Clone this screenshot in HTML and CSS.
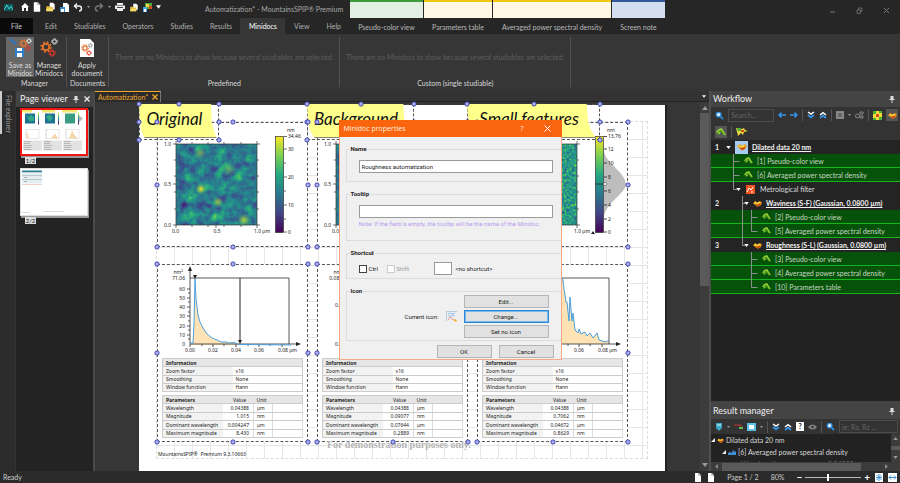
FILE: index.html
```html
<!DOCTYPE html>
<html lang="en">
<head>
<meta charset="utf-8">
<title>Automatization* - MountainsSPIP® Premium</title>
<link rel="stylesheet" href="styles.css">
</head>
<body>
<svg class="defs" aria-hidden="true">
  <defs>
    <filter id="rough" x="0" y="0" width="100%" height="100%" color-interpolation-filters="sRGB">
      <feTurbulence type="fractalNoise" baseFrequency="0.1" numOctaves="5" seed="11"/>
      <feColorMatrix values=".7 .6 0 0 -0.22  .7 .6 0 0 -0.22  .7 .6 0 0 -0.22  0 0 0 0 1"/>
      <feComponentTransfer>
        <feFuncR type="table" tableValues=".27 .25 .19 .14 .18 .45 .99"/>
        <feFuncG type="table" tableValues=".03 .25 .42 .56 .70 .82 .90"/>
        <feFuncB type="table" tableValues=".33 .53 .56 .55 .48 .30 .14"/>
      </feComponentTransfer>
    </filter>
    <filter id="fine" x="0" y="0" width="100%" height="100%" color-interpolation-filters="sRGB">
      <feTurbulence type="fractalNoise" baseFrequency="0.4" numOctaves="2" seed="5"/>
      <feColorMatrix values=".8 .4 0 0 -0.05  .8 .4 0 0 -0.05  .8 .4 0 0 -0.05  0 0 0 0 1"/>
      <feComponentTransfer>
        <feFuncR type="table" tableValues=".27 .25 .19 .14 .18 .45 .99"/>
        <feFuncG type="table" tableValues=".03 .25 .42 .56 .70 .82 .90"/>
        <feFuncB type="table" tableValues=".33 .53 .56 .55 .48 .30 .14"/>
      </feComponentTransfer>
    </filter>
    <linearGradient id="viridis" x1="0" y1="1" x2="0" y2="0">
      <stop offset="0" stop-color="#440154"/><stop offset=".2" stop-color="#414487"/><stop offset=".4" stop-color="#2a788e"/><stop offset=".6" stop-color="#22a884"/><stop offset=".8" stop-color="#7ad151"/><stop offset="1" stop-color="#fde725"/>
    </linearGradient>
    <radialGradient id="spot"><stop offset="0" stop-color="#f4e625"/><stop offset=".4" stop-color="#a0d53a" stop-opacity=".75"/><stop offset="1" stop-color="#35b779" stop-opacity="0"/></radialGradient>
    <symbol id="gear" viewBox="0 0 12 12"><circle cx="6" cy="6" r="3.2" fill="none" stroke="currentColor" stroke-width="1.7"/><circle cx="6" cy="6" r="4.9" fill="none" stroke="currentColor" stroke-width="1.6" stroke-dasharray="1.95 1.9"/></symbol>
    <symbol id="page" viewBox="0 0 10 12"><path d="M1 0h5l3 3v9H1z" fill="#fff"/><path d="M6 0v3h3" fill="none" stroke="#888"/></symbol>
    <symbol id="folder" viewBox="0 0 12 12"><path d="M5 1h4l2 2v6H5z" fill="#fff"/><path d="M1 5h3l1 1h4v5H1z" fill="#e9c23c"/><path d="M1 8h8v3H1z" fill="#f7dd6c"/></symbol>
    <symbol id="pin" viewBox="0 0 8 8"><path d="M2.5 1h3v3h1v1h-5V4h1zM3.6 5h.9v3h-.9z" fill="#ddd"/></symbol>
    <symbol id="wand" viewBox="0 0 10 8"><path d="M1 4.500 3 1l3-.3L9 7 7.500 7.500 5 4 3.500 4 2 7z" fill="#4d9a1c"/><path d="M.5 4.500 3 1.500 5.500 1 9.300 6.800M2.500 6l1.500-2" fill="none" stroke="#9ed63c" stroke-width="1.3"/></symbol>
    <symbol id="surface" viewBox="0 0 12 9"><path d="m0 4 3-3 3 2 3-2 3 2-2 4-4 1.8z" fill="#e8941a"/><path d="m1 4 2-2 2 2 3-2 2 1-3 2z" fill="#ffe14a"/><path d="m3 5 3 1 4-2-1 3-3 1z" fill="#c3420f"/></symbol>
    <symbol id="lens" viewBox="0 0 10 10"><circle cx="4" cy="4" r="2.6" fill="#dff0ff" stroke="#2f8fe0" stroke-width="1.4"/><path d="m6 6 3 3" stroke="#2f8fe0" stroke-width="1.8"/></symbol>
    <symbol id="down2" viewBox="0 0 8 8"><path d="m1 1 3 2 3-2" fill="none" stroke="#fff" stroke-width="1.5"/><path d="m1 4 3 2.4L7 4" fill="none" stroke="#3597ec" stroke-width="1.7"/></symbol>
    <symbol id="up2" viewBox="0 0 8 8"><path d="m1 4 3-2.4L7 4" fill="none" stroke="#fff" stroke-width="1.5"/><path d="m1 7 3-2.4L7 7" fill="none" stroke="#3597ec" stroke-width="1.7"/></symbol>
    <symbol id="caret" viewBox="0 0 6 4"><path d="M0 0h6L3 4z" fill="currentColor"/></symbol>
    <symbol id="mapaxes" viewBox="0 0 151 125">
      <path d="M16 22h87M16 103h87M19 19v87M100 19v87M17 38h2M17 54h2M17 70h2M17 87h2M35 103v2M51 103v2M59 103v3M67 103v2M84 103v2M35 20v2M51 20v2M67 20v2M84 20v2M100 38h2M100 54h2M100 70h2M100 87h2M16 62h3" stroke="#333" stroke-width=".7" fill="none"/>
      <g class="lbl"><text x="14" y="24" text-anchor="end">1.0</text><text x="14" y="64" text-anchor="end">0.5</text><text x="14" y="105" text-anchor="end">0.0</text><text x="15" y="111">0.0</text><text x="60" y="111" text-anchor="middle">0.5</text><text x="97" y="111">1.0 µm</text></g>
    </symbol>
    <symbol id="psdaxes" viewBox="0 0 151 92">
      <path d="M33 80V5M33 80h108M33 14h99v66M30 25h3M30 34h3M30 43h3M30 52h3M30 62h3M30 71h3M31 29h2M31 38h2M31 48h2M31 57h2M31 66h2M31 75h2M33 80v3M45 80v2M56 80v3M67 80v2M79 80v3M91 80v2M102 80v3M113 80v2M125 80v3" stroke="#444" stroke-width=".9" fill="none"/>
      <path d="m33 2 2 5h-4zM144 80l-5-2v4z" fill="#222"/>
      <g class="lbl"><text x="33" y="88" text-anchor="middle">0.00</text><text x="56" y="88" text-anchor="middle">0.02</text><text x="79" y="88" text-anchor="middle">0.04</text><text x="102" y="88" text-anchor="middle">0.06</text><text x="121" y="88">0.08 µm</text></g>
    </symbol>
  </defs>
</svg>

<div class="app">
  <header class="top">
    <div class="top-left">
      <div class="titlebar">
        <div class="qat">
          <svg class="logo" width="9" height="9" viewBox="0 0 9 9"><path d="M0 1h9v7H0z" fill="#0d5962"/><path d="m0 7 3-5 2 4 2-3 2 4" fill="none" stroke="#43d0bb"/></svg>
          <svg width="8" height="8" viewBox="0 0 8 8"><path d="M4 0 0 4h1v4h2V5h2v3h2V4h1z" fill="#fff"/></svg>
          <svg width="8" height="10"><use href="#page"/></svg>
          <svg width="11" height="10"><use href="#folder"/></svg>
          <svg width="9" height="9" viewBox="0 0 9 9"><path d="M3 0h4l2 2v7H3z" fill="#fff"/><path d="M0 4h5v5H0z" fill="#3589cf"/><path d="M1 6h3v3H1z" fill="#fff"/></svg>
          <svg width="10" height="9" viewBox="0 0 10 9"><path d="M1 3h5a2.5 2.5 0 0 1 0 5M4 .5 1.5 3 4 5.500" fill="none" stroke="#eee" stroke-width="1.4"/></svg>
          <svg class="dim" width="3" height="2"><use href="#caret"/></svg>
          <svg width="10" height="9" viewBox="0 0 10 9"><path d="M9 3H4a2.500 2.500 0 0 0 0 5M6 .5 8.500 3 6 5.500" fill="none" stroke="#777" stroke-width="1.4"/></svg>
          <svg class="dim" width="3" height="2"><use href="#caret"/></svg>
          <svg width="10" height="8" viewBox="0 0 10 8"><path d="M2 0h6v2H2zM0 2.500h10V6H0zM2 5h6v3H2z" fill="#eee"/><path d="M2 4.500h6" stroke="#444"/></svg>
          <svg width="10" height="9"><use href="#folder"/></svg>
          <svg width="9" height="9" viewBox="0 0 9 9"><path d="M2 0h7v6H2z" fill="#50a83a"/><path d="M3 1h3v3H3z" fill="#f4d33c"/><path d="M6 3h3v3H6z" fill="#d64a22"/><path d="M0 4h4v5H0z" fill="#4ba5ea"/><path d="M1 6h2v3H1z" fill="#fff"/></svg>
          <svg class="lit" width="5" height="4"><use href="#caret"/></svg>
        </div>
        <div class="title">Automatization* - MountainsSPIP® Premium</div>
      </div>
      <nav class="tabs">
        <button class="file">File</button><button>Edit</button><button>Studiables</button><button>Operators</button><button>Studies</button><button>Results</button><button class="on">Minidocs</button><button>View</button><button>Help</button>
      </nav>
    </div>
    <nav class="context">
      <button class="green"><i></i>Pseudo-color view</button>
      <button class="yellow"><i></i>Parameters table</button>
      <button class="yellow"><i></i>Averaged power spectral density</button>
      <button class="blue"><i></i>Screen note</button>
    </nav>
    <div class="winctl">
      <button aria-label="Minimize"><svg width="7" height="7" viewBox="0 0 7 7"><path d="M1 5h5" stroke="#777"/></svg></button>
      <button aria-label="Restore"><svg width="7" height="7" viewBox="0 0 7 7"><path d="M1 3h3.500v3.500H1zM2.500 3V1H6v3.500H4.500" fill="none" stroke="#666"/></svg></button>
      <button aria-label="Close"><svg width="7" height="7" viewBox="0 0 7 7"><path d="m1 1 5 5M6 1 1 6" stroke="#777"/></svg></button>
    </div>
  </header>

  <section class="ribbon">
    <div class="group">
      <div class="items">
        <button class="big sel"><svg width="24" height="20" viewBox="0 0 24 20"><path d="m2 1 6 5" stroke="#2a79c6" stroke-width="2"/><path d="M7 10h9v9H7z" fill="#2f7fca"/><path d="M9 10h5v3H9zM9 15h5v4H9z" fill="#fff"/><svg x="11" y="1" width="9" height="9" color="#e8742c"><use href="#gear"/></svg><svg x="18" y="0" width="6" height="6" color="#eee"><use href="#gear"/></svg><svg x="17" y="7" width="6" height="6" color="#e03a28"><use href="#gear"/></svg></svg>Save as<br>Minidoc</button>
        <button class="big"><svg width="20" height="20" viewBox="0 0 20 20"><svg x="1" y="3" width="12" height="12" color="#e8742c"><use href="#gear"/></svg><svg x="12" y="0" width="7" height="7" color="#eee"><use href="#gear"/></svg><svg x="9" y="11" width="8" height="8" color="#e03a28"><use href="#gear"/></svg></svg>Manage<br>Minidocs</button>
      </div>
      <div class="cap">Manager</div>
    </div>
    <div class="group">
      <div class="items">
        <button class="big wide"><svg width="16" height="20" viewBox="0 0 16 20"><path d="M1 1h10l4 4v14H1z" fill="#fff"/><svg x="2" y="6" width="8" height="8" color="#e8742c"><use href="#gear"/></svg><svg x="9" y="5" width="5" height="5" color="#777"><use href="#gear"/></svg><svg x="7" y="12" width="6" height="6" color="#e03a28"><use href="#gear"/></svg></svg>Apply<br>document</button>
      </div>
      <div class="cap">Documents</div>
    </div>
    <div class="group gallery">
      <p>There are no Minidocs to show because several studiables are selected.</p>
      <div class="cap">Predefined</div>
    </div>
    <div class="group gallery">
      <p>There are no Minidocs to show because several studiables are selected.</p>
      <div class="cap">Custom (single studiable)</div>
    </div>
  </section>

  <main class="work">
    <aside class="strip"><span>File explorer</span></aside>
    <aside class="viewer">
      <h2>Page viewer <svg width="8" height="8"><use href="#pin"/></svg><svg width="6" height="6" viewBox="0 0 6 6"><path d="m.5.5 5 5M5.500.5l-5 5" stroke="#eee" stroke-width="1.3"/></svg></h2>
      <div class="thumbs">
        <figure class="cur">
          <svg viewBox="0 0 66 45"><path d="M0 0h11v3H0zM21 0h13v3H21zM41 0h15v3H41z" fill="#f2ea70"/><path d="M4 4h10v10H4zM24 4h10v10H24z" fill="#1f7391"/><path d="m5 6 3 2 2-3 3 3v3l-4 1zM25 7l4-2 3 4-4 3z" fill="#32a889"/><path d="M44 4h10v10H44z" fill="#3a9c82"/><path d="M17 3h1v12h-1zM37 3h1v12h-1z" fill="url(#viridis)"/><path d="M57 3h1v12h-1z" fill="url(#viridis)"/><path d="m58 6 4 3-4 4z" fill="#bbb"/><path d="M5 29V20M25 29V20M45 29V20M5 20h13v9H5zM25 20h13v9H25zM45 20h13v9H45z" fill="none" stroke="#ccc" stroke-width=".5"/><path d="m6 29 0-7 2 6zM30 29l4-5 3 5zM48 29l3-8 3 5 3 3z" fill="#f5d6a8"/><path d="M2 31h19v10H2zM22 31h19v10H22zM42 31h19v10H42z" fill="#e3e3e3"/><path d="M3 32h7M3 34h6M3 36h8M3 38h7M3 40h8M23 32h7M23 34h6M23 36h8M23 38h7M23 40h8M43 32h7M43 34h6M43 36h8M43 38h7M43 40h8" stroke="#999" stroke-width=".6"/></svg>
          <figcaption>1/2</figcaption>
        </figure>
        <figure>
          <svg viewBox="0 0 66 45"><path d="M1 1h20v2H1z" fill="#287d91"/><path d="M1 3h20v11H1z" fill="#e6edf1"/><path d="M1 6h20M1 10h20" stroke="#b7cad4"/><path d="M1 15h20" stroke="#e6a58c" stroke-width=".5"/><path d="M3 8h3M3 12h3" stroke="#888" stroke-width=".6"/><path d="M23 42h20M1 43h8" stroke="#ccc" stroke-width=".7"/></svg>
          <figcaption>2/2</figcaption>
        </figure>
      </div>
    </aside>

    <section class="doc">
      <div class="doctabs"><button>Automatization* <svg width="6" height="6" viewBox="0 0 6 6"><path d="m.5.5 5 5M5.500.5l-5 5" stroke="#f0a92c" stroke-width="1.300"/></svg></button><svg class="lit" width="4" height="3"><use href="#caret"/></svg></div>
      <div class="docbody">
        <div class="canvas">
          <div class="paper">
            <div class="note n1 picked"><b>Original</b></div>
            <div class="note n2 picked"><b>Background</b></div>
            <div class="note n3 picked"><b>Small features</b></div>
            <div class="board">
              <div class="frame picked">
                <svg viewBox="0 0 151 125"><rect x="19" y="22" width="81" height="81" filter="url(#rough)"/><circle cx="44" cy="67" r="6" fill="url(#spot)"/><circle cx="87" cy="98" r="7" fill="url(#spot)" opacity=".7"/><circle cx="61" cy="80" r="6" fill="url(#spot)" opacity=".6"/><circle cx="43" cy="31" r="7" fill="url(#spot)" opacity=".4"/><circle cx="72" cy="47" r="8" fill="url(#spot)" opacity=".3"/><use href="#mapaxes"/><rect x="118.500" y="14.500" width="8" height="96" fill="url(#viridis)" stroke="#333" stroke-width=".7"/><path d="M127 14.500h3M127 27h3M127 55h3M127 83h3M127 110h3M127 41h2M127 69h2M127 97h2" stroke="#333" stroke-width=".7"/><g class="lbl"><text x="130" y="10">nm</text><text x="131" y="16">34.46</text><text x="131" y="29">30</text><text x="131" y="57">20</text><text x="131" y="85">10</text><text x="131" y="112">0</text></g></svg>
              </div>
              <div class="frame picked">
                <svg viewBox="0 0 151 125"><rect x="19" y="22" width="81" height="81" filter="url(#rough)"/><use href="#mapaxes"/><rect x="118.500" y="14.500" width="8" height="96" fill="url(#viridis)"/></svg>
              </div>
              <div class="frame picked">
                <svg viewBox="0 0 151 125"><path d="M127 30c3 12 21 20 22 32-1 10-19 18-22 32z" fill="#bdbdbd"/><rect x="19" y="22" width="81" height="81" filter="url(#fine)"/><use href="#mapaxes"/><rect x="118.500" y="14.500" width="8" height="96" fill="url(#viridis)" stroke="#333" stroke-width=".7"/><path d="M127 14.500h3M127 27h3M127 41h3M127 55h3M127 69h3M127 83h3M127 97h3M127 110h3M118 62h9" stroke="#222" stroke-width=".8"/><circle cx="128" cy="62" r="1.600" fill="#fff" stroke="#444" stroke-width=".6"/><path d="m116 109 2 3h-4z" fill="#223"/><g class="lbl"><text x="130" y="10">nm</text><text x="131" y="16">13.76</text><text x="131" y="29">12</text><text x="131" y="43">10</text><text x="131" y="57">8</text><text x="131" y="71">6</text><text x="131" y="85">4</text><text x="131" y="99">2</text><text x="131" y="112">0</text></g></svg>
              </div>

              <div class="frame picked">
                <svg viewBox="0 0 151 92"><path d="M33 80h3l1-20 1-45 1 20 2 16 2 7 3 6 4 6 5 4 5 2 4 2 5 0 3 1 5-.5 5 2h8l44 .5H33z" fill="#ffe3b5"/><use href="#psdaxes"/><path d="M83 14v63" stroke="#222"/><path d="m83 80-2-4h4zM36 11h4l-2 4z" fill="#222"/><path d="M33 79h3l1-19 1-45 1 20 2 16 2 7 3 6 4 6 5 4 5 2 4 2 5 0 3 1 5-.5 5 2h8l44 .5" fill="none" stroke="#4a9fdf"/><g class="lbl"><text x="26" y="10" text-anchor="end">nm²</text><g text-anchor="end"><text x="28" y="16">71.06</text><text x="28" y="27">60</text><text x="28" y="36">50</text><text x="28" y="45">40</text><text x="28" y="54">30</text><text x="28" y="64">20</text><text x="28" y="73">10</text><text x="28" y="82">0</text></g></g></svg>
                <table><tr><th colspan="2">Information</th></tr><tr><td>Zoom factor</td><td>x16</td></tr><tr><td>Smoothing</td><td>None</td></tr><tr><td>Window function</td><td>Hann</td></tr></table>
                <table class="par"><tr><th>Parameters</th><th>Value</th><th>Unit</th><th></th></tr><tr><td>Wavelength</td><td>0.04388</td><td>µm</td><td></td></tr><tr><td>Magnitude</td><td>1.015</td><td>nm</td><td></td></tr><tr><td>Dominant wavelength</td><td>0.004247</td><td>µm</td><td></td></tr><tr><td>Maximum magnitude</td><td>8.430</td><td>nm</td><td></td></tr></table>
              </div>
              <div class="frame picked">
                <svg viewBox="0 0 151 92"><use href="#psdaxes"/><g class="lbl" text-anchor="end"><text x="26" y="10">nm²</text><text x="28" y="16">0.0838</text><text x="28" y="43">0.05</text><text x="28" y="82">0.00</text></g></svg>
                <table><tr><th colspan="2">Information</th></tr><tr><td>Zoom factor</td><td>x16</td></tr><tr><td>Smoothing</td><td>None</td></tr><tr><td>Window function</td><td>Hann</td></tr></table>
                <table class="par"><tr><th>Parameters</th><th>Value</th><th>Unit</th><th></th></tr><tr><td>Wavelength</td><td>0.04388</td><td>µm</td><td></td></tr><tr><td>Magnitude</td><td>0.09077</td><td>nm</td><td></td></tr><tr><td>Dominant wavelength</td><td>0.07644</td><td>µm</td><td></td></tr><tr><td>Maximum magnitude</td><td>0.2889</td><td>nm</td><td></td></tr></table>
              </div>
              <div class="frame picked">
                <svg viewBox="0 0 151 92"><path d="m80 80 5-66 1 2 1 9 2 13h1l2 19 1-24 2 24 1-8 2 17 3 3 1-4 2 5 4-2 2 4 3-3 3 5 4-5 2 7 3 1 4 1 3-2v4z" fill="#ffe3b5"/><use href="#psdaxes"/><path d="m80 60 5-46 1 2 1 9 2 13h1l2 19 1-24 2 24 1-8 2 17 3 3 1-4 2 5 4-2 2 4 3-3 3 5 4-5 2 7 3 1 4 1 3-2" fill="none" stroke="#4a9fdf"/></svg>
                <table><tr><th colspan="2">Information</th></tr><tr><td>Zoom factor</td><td>x16</td></tr><tr><td>Smoothing</td><td>None</td></tr><tr><td>Window function</td><td>Hann</td></tr></table>
                <table class="par"><tr><th>Parameters</th><th>Value</th><th>Unit</th><th></th></tr><tr><td>Wavelength</td><td>0.04388</td><td>µm</td><td></td></tr><tr><td>Magnitude</td><td>0.7062</td><td>nm</td><td></td></tr><tr><td>Dominant wavelength</td><td>0.04672</td><td>µm</td><td></td></tr><tr><td>Maximum magnitude</td><td>0.8629</td><td>nm</td><td></td></tr></table>
              </div>
            </div>
            <div class="mark">For demonstration purposes only.</div>
            <div class="foot">MountainsSPIP®  Premium 9.3.10663</div>
          </div>
        </div>
        <div class="vscroll"><svg width="6" height="4" class="flip"><use href="#caret"/></svg><i></i><svg width="6" height="4"><use href="#caret"/></svg></div>
      </div>
    </section>

    <aside class="side">
      <section class="flow">
        <h2>Workflow <svg width="8" height="8"><use href="#pin"/></svg></h2>
        <div class="tools">
          <svg width="9" height="9"><use href="#lens"/></svg>
          <input type="text" placeholder="Search..." aria-label="Search workflow">
          <svg width="8" height="6" viewBox="0 0 8 6"><path d="M8 3H1m2.500-2.500L1 3l2.500 2.500" fill="none" stroke="#3597ec" stroke-width="1.400"/></svg>
          <svg width="8" height="6" viewBox="0 0 8 6"><path d="M0 3h7M4.500.5 7 3 4.500 5.500" fill="none" stroke="#3597ec" stroke-width="1.400"/></svg>
          <hr><svg width="8" height="8"><use href="#down2"/></svg><svg width="8" height="8"><use href="#up2"/></svg><hr>
          <svg width="8" height="8" viewBox="0 0 8 8"><path d="M0 0h8v8H0z" fill="#888"/><path d="M2 3h4M2 5h4" stroke="#444"/></svg>
          <svg class="dim" width="3" height="2"><use href="#caret"/></svg>
          <svg width="9" height="8" viewBox="0 0 9 8"><circle cx="2.500" cy="5" r="2" fill="none" stroke="#888"/><path d="M5 1h3v2H5zM5 5h3v2H5z" fill="none" stroke="#888"/></svg>
          <hr>
          <svg width="9" height="9" viewBox="0 0 9 9"><path d="M0 0h9v9H0z" fill="#f6da38"/><path d="M0 0h3v3H0zM6 6h3v3H6zM6 0h3v2H6zM0 7h3v2H0z" fill="#4dae3a"/><path d="M3 3h3v3H3z" fill="#d84a20"/></svg>
          <span class="tog"><svg width="9" height="7"><use href="#surface"/></svg></span>
        </div>
        <div class="tools two"><span class="tog"><svg width="10" height="8"><use href="#wand"/></svg></span><hr><svg width="12" height="9" viewBox="0 0 12 9"><path d="m0 1 6 1 2-1 1 2 3 1-4 1-1 3-2-2-3 3z" fill="#e7d63b"/><path d="M1 1h4v3H2z" fill="#50ad3c"/><path d="M5 3h3v2H5z" fill="#d94d22"/></svg></div>
        <div class="tree">
          <svg class="links" width="60" height="154"><path d="M22.500 14v35.500H26M22.500 21.500h6M22.500 35.500h6M31.500 56v49.500H34M31.500 63.500H34M40.500 70v21.500h6M40.500 77.500h6M40.500 112v35.500h6M40.500 119.500h6M40.500 133.500h6" fill="none" stroke="#8b8f8b"/></svg>
          <div class="row l0"><em>1</em><svg class="car" width="5" height="3"><use href="#caret"/></svg><span class="hl"><svg width="10" height="8"><use href="#surface"/></svg></span><u>Dilated data 20 nm</u></div>
          <div class="row g l1"><svg width="9" height="7"><use href="#wand"/></svg>[1] Pseudo-color view</div>
          <div class="row g l1"><svg width="9" height="7"><use href="#wand"/></svg>[6] Averaged power spectral density</div>
          <div class="row lm"><svg class="car" width="5" height="3"><use href="#caret"/></svg><svg class="met" width="9" height="9" viewBox="0 0 9 9"><path d="M0 0h9v9H0z" fill="#ef5523"/><path d="M1 7 3 3l2 2 2-3M5 7h2" fill="none" stroke="#fff"/></svg>Metrological filter</div>
          <div class="row l2"><em>2</em><svg class="car" width="5" height="3"><use href="#caret"/></svg><svg width="9" height="7"><use href="#surface"/></svg><u>Waviness (S-F) (Gaussian, 0.0800 µm)</u></div>
          <div class="row g l3"><svg width="9" height="7"><use href="#wand"/></svg>[2] Pseudo-color view</div>
          <div class="row g l3"><svg width="9" height="7"><use href="#wand"/></svg>[5] Averaged power spectral density</div>
          <div class="row l2"><em>3</em><svg class="car" width="5" height="3"><use href="#caret"/></svg><svg width="9" height="7"><use href="#surface"/></svg><u>Roughness (S-L) (Gaussian, 0.0800 µm)</u></div>
          <div class="row g l3"><svg width="9" height="7"><use href="#wand"/></svg>[3] Pseudo-color view</div>
          <div class="row g l3"><svg width="9" height="7"><use href="#wand"/></svg>[4] Averaged power spectral density</div>
          <div class="row g l3"><svg width="9" height="7"><use href="#wand"/></svg>[10] Parameters table</div>
        </div>
      </section>
      <section class="results">
        <h2>Result manager <svg width="8" height="8"><use href="#pin"/></svg></h2>
        <div class="tools">
          <svg width="8" height="9" viewBox="0 0 8 9"><path d="M1 1h6v5L4 9 1 6z" fill="#3ca6c4"/><path d="M2 3h4" stroke="#dff"/></svg><svg class="dim" width="3" height="2"><use href="#caret"/></svg>
          <svg width="9" height="6" viewBox="0 0 9 6"><path d="M0 1h7v3" fill="none" stroke="#c33"/><path d="M5 3h4v2H5z" fill="#5b5"/></svg>
          <svg width="9" height="8" viewBox="0 0 9 8"><path d="M0 0h9v8H0z" fill="#5cc0e4"/><path d="M2 2h5v4H2z" fill="#fff"/></svg><svg class="dim" width="3" height="2"><use href="#caret"/></svg>
          <hr><svg width="8" height="8"><use href="#down2"/></svg><svg width="8" height="8"><use href="#up2"/></svg>
          <span class="help">?</span>
          <svg width="9" height="6" viewBox="0 0 9 6"><path d="M0 3q4.500-5 9 0-4.500 5-9 0z" fill="#888"/><circle cx="4.500" cy="3" r="1.300" fill="#333"/></svg>
          <hr><svg width="9" height="9"><use href="#lens"/></svg>
          <input type="text" placeholder="ie: Ra, Rz ..." aria-label="Filter results">
        </div>
        <div class="rlist">
          <div class="ritems">
            <div class="rrow"><svg width="4" height="4" viewBox="0 0 4 4"><path d="M4 0v4H0z" fill="#eee"/></svg><svg width="7" height="5"><use href="#surface"/></svg>Dilated data 20 nm</div>
            <div class="rrow in"><svg width="4" height="4" viewBox="0 0 4 4"><path d="M4 0v4H0z" fill="#eee"/></svg><svg width="8" height="5" viewBox="0 0 8 5"><path d="M0 5V3l2-1 2 1 1-3 2 2 1-1v4z" fill="#3d8fd6"/></svg>[6] Averaged power spectral density</div>
            <div class="rrow deep">Wavelength <span>0.04388</span></div>
          </div>
          <div class="vscroll"><svg width="5" height="3" class="flip"><use href="#caret"/></svg><i></i><svg width="5" height="3"><use href="#caret"/></svg></div>
        </div>
        <div class="hscroll"><svg width="3" height="5" viewBox="0 0 3 5"><path d="M3 0v5L0 2.500z" fill="#888"/></svg><i></i><svg width="3" height="5" viewBox="0 0 3 5"><path d="M0 0v5l3-2.500z" fill="#888"/></svg></div>
      </section>
    </aside>
  </main>

  <footer class="status">
    <span class="ready">Ready</span>
    <svg width="8" height="9"><use href="#page"/></svg><svg width="8" height="9"><use href="#page"/></svg>
    <span>Page 1 / 2</span><span>80%</span>
    <span class="zoom"><b>−</b><input type="range" min="0" max="100" value="40" aria-label="Zoom"><b>+</b></span>
    <svg width="8" height="9" viewBox="0 0 8 9"><path d="M0 0h8v9H0z" fill="#fff"/><path d="M4 1v7M1 4.500h6M1.500 2l5 5M6.500 2l-5 5" stroke="#3a8fd6" stroke-width=".9"/></svg>
    <svg width="9" height="9" viewBox="0 0 9 9"><path d="M0 0h9v9H0z" fill="#fff"/><path d="M1 4.500h7M3 2.500l-2 2 2 2M6 2.500l2 2-2 2" fill="none" stroke="#3a8fd6"/></svg>
  </footer>
</div>

<form class="dialog" role="dialog" aria-label="Minidoc properties">
  <div class="dtitle"><span>Minidoc properties</span><button type="button">?</button><button type="button" aria-label="Close"><svg width="7" height="7" viewBox="0 0 7 7"><path d="m.5.5 6 6M6.500.5l-6 6" stroke="#fff"/></svg></button></div>
  <div class="dbody">
    <fieldset class="f1"><legend>Name</legend><input type="text" value="Roughness automatization" aria-label="Name"></fieldset>
    <fieldset class="f2"><legend>Tooltip</legend><input type="text" aria-label="Tooltip"><p>Note: If the field is empty, the tooltip will be the name of the Minidoc.</p></fieldset>
    <fieldset class="f3"><legend>Shortcut</legend>
      <label><input type="checkbox">Ctrl</label><label class="off"><input type="checkbox" disabled>Shift</label><input class="key" type="text" aria-label="Shortcut key"><span>&lt;no shortcut&gt;</span>
    </fieldset>
    <fieldset class="f4"><legend>Icon</legend>
      <div class="iconrow"><span>Current icon:</span>
        <svg width="11" height="11" viewBox="0 0 11 11"><path d="M0 .5h11M.5 0v10" stroke="#bcd" fill="none"/><path d="m2 3 2-1 2 1 3-1M2 5l3 0 2-1 2 1" fill="none" stroke="#7ab4ea" stroke-width=".8"/><path d="m2 9 2-3 2 1 1 2h2" fill="none" stroke="#e88" stroke-width=".9"/><circle cx="9.500" cy="9.500" r="1.300" fill="#f0b429"/></svg>
        <div class="stack"><button type="button">Edit...</button><button type="button" class="focus">Change...</button><button type="button">Set no icon</button></div>
      </div>
    </fieldset>
    <div class="dfoot"><button type="button">OK</button><button type="button">Cancel</button></div>
  </div>
</form>
</body>
</html>
```
FILE: styles.css
```css
* { box-sizing: border-box; }
body { margin: 0; background: #363636; color: #d6d6d6; font: 7px/10px Lato, "Liberation Sans", sans-serif; }
button, input { font: inherit; color: inherit; margin: 0; padding: 0; border: 0; background: none; }
svg { display: block; flex: none; }
h2 { margin: 0; font-weight: 400; font-size: 9px; line-height: 16px; color: #eee; background: #444; display: flex; align-items: center; padding: 0 4px 0 2px; white-space: nowrap; }
h2 svg:first-of-type { margin-left: auto; }
.defs { position: absolute; width: 0; height: 0; }
.app { height: 100vh; display: flex; flex-direction: column; overflow: hidden; }
.lbl { font: 5px "Noto Sans", sans-serif; fill: #222; }
.dim { color: #999; }
.lit { color: #fff; }

/* title bar and tabs */
.top { display: flex; height: 34px; background: #262626; flex: none; }
.top-left { width: 350px; }
.titlebar { display: flex; height: 18px; align-items: center; padding-left: 4px; }
.qat { display: flex; align-items: center; gap: 4px; padding-bottom: 4px; flex: 1; }
.logo { margin-right: 4px; }
.title { width: 145px; color: #a8a8a8; font-size: 7px; }
.tabs { display: flex; height: 16px; }
.tabs button { padding: 0 8px 0 9px; color: #b0b0b0; }
.tabs .file { background: #0a0a0a; padding: 0 11px; margin-right: 3px; color: #ccc; }
.tabs .on { background: #363636; color: #fff; }
.context { display: grid; grid-template-columns: 73px 68px 118px 53px; gap: 1px; color: #b8b8b8; }
.context button { display: flex; flex-direction: column; align-items: center; white-space: nowrap; }
.context i { height: 18px; width: 100%; margin-bottom: 4px; border-top: 2px solid; }
.green i { background: #e2f0e4; border-color: #3d9a3d; }
.yellow i { background: #fff9e3; border-color: #f0c814; }
.blue i { background: #d3dff0; border-color: #34599a; }
.winctl { margin-left: auto; display: flex; gap: 20px; height: 20px; align-items: center; padding-right: 10px; }

/* ribbon */
.ribbon { display: flex; height: 57px; padding: 3px 0 0 4px; flex: none; background: #363636; }
.group { display: flex; flex-direction: column; height: 50px; padding: 0 3px 0 2px; border-right: 1px solid #515151; white-space: nowrap; }
.group + .group { padding: 0 3px; }
.items { display: flex; gap: 1px; }
.big { width: 28px; height: 40px; line-height: 8px; display: block; text-align: center; color: #ddd; }
.big.wide { width: 34px; }
.big svg { margin: 1px auto 3px; }
.sel { background: #686868; }
.cap { margin-top: auto; text-align: center; line-height: 8px; }
.group.gallery { padding: 0 6px; }
.gallery p { margin: 15px 0 0; color: #5e5e5e; }

/* work area */
.work { flex: 1; min-height: 0; display: grid; grid-template-columns: 16px 79px 1fr 191px; }
.strip { background: #2c2c2c; border-right: 1px solid #333; }
.strip::before { content: ""; float: left; width: 2px; height: 43px; background: #ccc; }
.strip span { writing-mode: vertical-rl; display: block; margin: 4px 0 0 4px; font-size: 7px; color: #999; }
.viewer { background: #232323; border-right: 2px solid #4a4a4a; }
.viewer h2 { gap: 4px; padding-left: 4px; }
.thumbs { padding: 1px 4px 0; }
figure { margin: 0 0 4px; }
figure > svg { width: 68px; height: 48px; background: #fff; border: 1px solid #ddd; box-shadow: 1px 2px 0 #999; }
figure.cur > svg { border-color: #f01414; outline: 1px solid #f01414; outline-offset: -2px; }
figcaption { width: 11px; margin: 1px 0 0 5px; font-size: 6px; line-height: 7px; background: #ddd; color: #222; text-align: center; position: relative; }
.doc { display: flex; flex-direction: column; min-width: 0; }
.doctabs { display: flex; height: 11px; align-items: center; justify-content: space-between; padding-right: 3px; background: #333; border-bottom: 1px solid #222; }
.doctabs button { display: flex; gap: 4px; align-items: center; height: 11px; padding: 0 2px 0 3px; color: #f0a92c; background: #2a2a2a; border-top: 1px solid #f0a92c; border-right: 1px solid #777; }
.docbody { flex: 1; display: flex; min-height: 0; }
.canvas { flex: 1; padding: 3px 0 0 9px; display: flex; justify-content: center; background: #363636; }
.vscroll { width: 9px; display: flex; flex-direction: column; align-items: center; justify-content: space-between; padding: 4px 0; background: #3c3c3c; color: #999; }
.flip { transform: rotate(180deg); }
.vscroll i { width: 9px; height: 173px; margin: 3px 0 auto; background: #5a5a5a; }
.paper { position: relative; width: 526px; flex: none; background: #fff; color: #222; padding: 16px 17px 0; box-shadow: 2px 0 0 #222; font: 5px/6px "Noto Sans", sans-serif; }
.board { height: 338px; display: grid; grid-template-columns: repeat(3, 151px); grid-template-rows: 125px 178px; gap: 17px 9px; align-content: start;
  border: 1px dashed #ddd; background: repeating-linear-gradient(90deg, #0000 0 17px, #e6e6e6 17px 18px), repeating-linear-gradient(#0000 0 17px, #e6e6e6 17px 18px); }
.frame { position: relative; background: #fff; }
.frame > svg { width: 100%; overflow: visible; }
.picked { outline: 1px dashed #555; outline-offset: -1px; }
.picked::before { content: ""; position: absolute; z-index: 2; inset: -3px; --h: radial-gradient(circle, #aab0ff 1px, #4a4fa8 2px, #4a4fa8 2px, #0000 3px);
  background: var(--h) 0 0, var(--h) 50% 0, var(--h) 100% 0, var(--h) 0 50%, var(--h) 100% 50%, var(--h) 0 100%, var(--h) 50% 100%, var(--h) 100% 100%;
  background-size: 6px 6px; background-repeat: no-repeat; }
.note { position: absolute; top: -1px; height: 36px; z-index: 1; text-align: center; }
.note b { display: block; height: 34px; background: #ffff8c; clip-path: polygon(0 0, 90% 0, 91% 50%, 93% 75%, 97% 100%, 7% 100%, 3% 80%, 1% 50%); border-bottom: 1px solid #887; font: italic 17px/30px Lato, sans-serif; color: #111; padding-right: 9px; }
.n1 { left: 0; width: 80px; }
.n2 { left: 168px; width: 107px; }
.n3 { left: 328px; width: 133px; }
.frame table { width: 141px; height: 34px; margin: 2px 0 0 5px; border-collapse: collapse; table-layout: fixed; border: 1px solid #ccc; }
.frame table.par { height: 43px; margin-top: 3px; }
td, th { padding: 0 0 0 3px; text-align: left; line-height: 6px; border-bottom: 1px solid #ccc; }
th { background: #e6e6e6; }
td:first-child { width: 60px; background: #f2f2f2; }
.par th:first-child { width: 60px; }
.par th:nth-child(2) { width: 31px; text-align: center; }
.par th:nth-child(3) { width: 19px; }
.par th + th { font-weight: 400; }
.par td:nth-child(2) { text-align: right; padding-right: 4px; }
.par td + td { border-right: 1px solid #ddd; }
.mark { position: absolute; left: 188px; top: 334px; font: bold 10px/12px "Liberation Serif", serif; color: #b5b5b5; }
.foot { position: absolute; left: 19px; top: 346px; white-space: pre; }

/* side panels */
.side { display: flex; flex-direction: column; min-width: 0; min-height: 0; border-left: 2px solid #4f4f4f; background: #222; }
.flow { flex: 1; min-height: 0; overflow: hidden; }
.tools { display: flex; align-items: center; gap: 4px; height: 16px; padding: 0 2px 0 4px; background: #333; }
.tools input { flex: 1; min-width: 0; height: 13px; border: 1px solid #4c4c4c; padding-left: 2px; }
.tools input::placeholder { color: #666; }
.tools hr { width: 1px; height: 12px; margin: 0; border: 0; background: #555; }
.tools.two { height: 17px; }
.tog { background: #555; width: 12px; height: 12px; display: flex; align-items: center; justify-content: center; }
.help { background: #fff; color: #111; width: 8px; height: 9px; font-weight: 700; text-align: center; line-height: 9px; }
.tree { position: relative; }
.links { position: absolute; left: 0; top: 0; }
.row { display: flex; align-items: center; gap: 4px; height: 14px; white-space: nowrap; background: #242424; color: #ddd; }
.row.g { background: #07520a; border-bottom: 1px solid #12b51a; color: #c6d9c2; }
.row em { position: absolute; left: 4px; font-style: normal; font-weight: 700; color: #eee; }
.row u { font-weight: 700; color: #f2f2f2; }
.car { color: #fff; }
.hl { width: 13px; height: 13px; background: #a9cdf2; display: flex; align-items: center; justify-content: center; }
.row.l0 { gap: 4px; padding-left: 15px; }
.l1 { padding-left: 33px; }
.row.lm { gap: 5px; padding-left: 25px; }
.l2 { padding-left: 33px; }
.l3 { padding-left: 51px; }
.results { border-top: 2px solid #444; }
.results .tools { height: 15px; }
.rlist { display: flex; height: 28px; }
.ritems { flex: 1; min-width: 0; overflow: hidden; white-space: nowrap; }
.rrow { display: flex; align-items: center; gap: 2px; height: 12px; }
.rrow.in { padding-left: 11px; }
.rrow.deep { padding-left: 30px; gap: 50px; color: #777; }
.rlist .vscroll { padding: 3px 0; }
.rlist .vscroll i { height: 4px; margin: 2px 0; }
.hscroll { display: flex; align-items: center; gap: 4px; height: 9px; padding: 0 12px 0 4px; background: #3c3c3c; }
.hscroll i { width: 139px; height: 8px; margin-right: auto; background: #5a5a5a; }

/* status bar */
.status { display: flex; align-items: center; gap: 5px; height: 12px; padding: 0 3px; background: #2b2b2b; flex: none; color: #ccc; white-space: nowrap; }
.ready { margin-right: auto; }
.status svg + span, .status span + span { margin-left: 7px; }
.zoom { display: flex; align-items: center; gap: 3px; }
.zoom b { color: #fff; font-size: 10px; }
.zoom input { appearance: none; width: 56px; height: 8px; background: linear-gradient(#bbb, #bbb) center / 100% 1px no-repeat; }
.zoom input::-webkit-slider-thumb { appearance: none; width: 2px; height: 7px; background: #fff; }

/* dialog */
.dialog { position: fixed; top: 120px; left: 0; right: 0; margin: auto; width: 223px; z-index: 5; background: #f0f0f0; color: #222; border: 1px solid #f5a883; border-top: 0; font: 6px/8px Roboto, "Noto Sans", sans-serif; }
.dtitle { display: flex; align-items: center; height: 17px; padding: 0 11px 0 5px; margin: 0 -1px; gap: 20px; background: #f9640c; color: #ffe9dc; font: 7px/10px "Noto Sans", sans-serif; }
.dtitle span { margin-right: auto; }
.dbody { padding: 8px 0 1px 6px; }
fieldset { margin: 0 0 8px; padding: 0; border: 1px solid #dcdcdc; border-right: 0; min-width: 0; }
legend { margin-left: -9px; padding: 0 1px; line-height: 8px; font-weight: 700; }
.dialog input[type=text] { display: block; width: 194px; height: 13px; background: #fff; border: 1px solid #9a9a9a; padding: 0 2px; }
.f1 { padding: 7px 0 8px 12px; }
.f2 { padding: 7px 0 12px 12px; }
.f2 p { margin: 2px 0 0; color: #b99af0; white-space: nowrap; }
.f3 { display: flex; align-items: center; padding: 5px 0 3px 12px; white-space: nowrap; }
.f3 label { display: flex; align-items: center; gap: 2px; width: 28px; }
.f3 label.off { width: 47px; color: #999; }
.f3 input[type=checkbox] { appearance: none; width: 8px; height: 8px; background: #fff; border: 1px solid #444; }
.f3 .off input[type=checkbox] { border-color: #ccc; }
.dialog input.key[type=text] { width: 18px; flex: none; margin-right: 4px; }
.f4 { padding: 0 12px 2px 0; margin-bottom: 4px; }
.f4 legend { margin-left: 3px; }
.iconrow { display: flex; align-items: center; justify-content: flex-end; gap: 7px; }
.stack { display: grid; gap: 2px; width: 85px; }
.dialog .stack button, .dfoot button { height: 13px; background: #e1e1e1; border: 1px solid #b5b5b5; }
.dialog .stack .focus { border: 1px solid #2a86d6; box-shadow: 0 0 0 1px #7ab8ee inset; }
.dfoot { display: flex; justify-content: flex-end; gap: 7px; padding-right: 7px; }
.dfoot button { width: 55px; }
```
